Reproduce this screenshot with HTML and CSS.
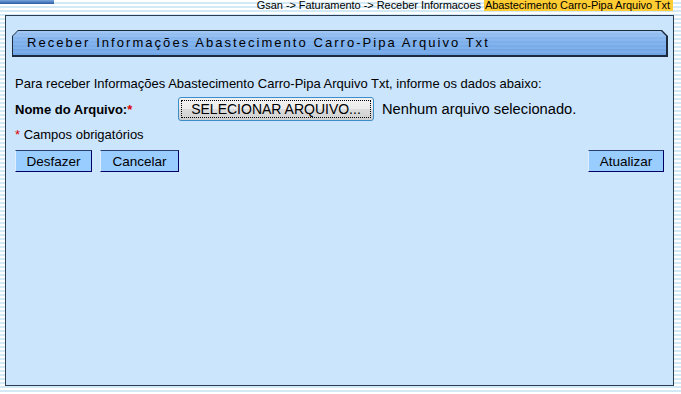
FILE: index.html
```html
<!DOCTYPE html>
<html lang="pt-BR">
<head>
  <meta charset="UTF-8" />
  <title>Gsan - Receber Informações Abastecimento Carro-Pipa Arquivo Txt</title>
  <link rel="stylesheet" href="styles.css">
</head>
<body>
  <div class="topbar">
    <div class="topbar-logo"></div>
    <div class="breadcrumb">
      Gsan -&gt; Faturamento -&gt; Receber Informacoes <span class="crumb-current">Abastecimento Carro-Pipa Arquivo Txt</span>
    </div>
  </div>

  <div class="panel">
    <div class="tab">
      <div class="tab-inner">Receber Informações Abastecimento Carro-Pipa Arquivo Txt</div>
    </div>

    <form class="form" onsubmit="return false">
      <p class="intro">Para receber Informações Abastecimento Carro-Pipa Arquivo Txt, informe os dados abaixo:</p>

      <div class="field-row">
        <label class="field-label">Nome do Arquivo:<span class="req">*</span></label>
        <label class="file-btn">SELECIONAR ARQUIVO...<input type="file" class="file-input"></label>
        <span class="file-name">Nenhum arquivo selecionado.</span>
      </div>

      <p class="note"><span class="req">*</span> Campos obrigatórios</p>

      <div class="actions">
        <button type="reset" class="btn btn-undo">Desfazer</button>
        <button type="button" class="btn btn-cancel">Cancelar</button>
        <button type="submit" class="btn btn-right">Atualizar</button>
      </div>
    </form>
  </div>
</body>
</html>
```

FILE: styles.css
```css
body {
  margin: 0;
  height: 394px;
  overflow: hidden;
  font-family: "Liberation Sans", Arial, sans-serif;
  background: repeating-linear-gradient(to bottom, #ffffff 0, #ffffff 2px, #d3e9f6 2px, #d3e9f6 4px);
}
.topbar {
  height: 15px;
  display: flex;
  justify-content: space-between;
  align-items: flex-start;
}
.topbar-logo {
  width: 54px;
  height: 4px;
  background: linear-gradient(to bottom, #7aa6dc, #2a5aa6);
}
.breadcrumb {
  font-size: 11px;
  line-height: 10px;
  color: #000;
  margin-right: 8px;
  white-space: nowrap;
  letter-spacing: -0.05px;
}
.crumb-current {
  background: #ffcc33;
  padding: 0 3px 0 1px;
}
.panel {
  margin-left: 5px;
  width: 669px;
  height: 371px;
  box-sizing: border-box;
  border: 1px solid #2b3c55;
  background: #cbe5fd;
  padding: 14px 5px 0 6px;
}
.tab {
  height: 27px;
  background: #1c2a3e;
  padding: 1px 2px 2px 1px;
  box-sizing: border-box;
  clip-path: polygon(6px 0, calc(100% - 6px) 0, 100% 6px, 100% 100%, 0 100%, 0 6px);
}
.tab-inner {
  height: 100%;
  background:
    repeating-linear-gradient(to bottom, rgba(255,255,255,0.08) 0, rgba(255,255,255,0.08) 2px, rgba(0,0,0,0) 2px, rgba(0,0,0,0) 4px),
    linear-gradient(to bottom, #9cc4f2 0, #7eb0ec 40%, #6ea4e6 100%);
  clip-path: polygon(5px 0, calc(100% - 5px) 0, 100% 5px, 100% 100%, 0 100%, 0 5px);
  font-size: 13px;
  letter-spacing: 2.05px;
  line-height: 24px;
  padding-left: 14px;
  color: #000;
  white-space: nowrap;
}
.form {
  padding: 0 3px;
  font-size: 13px;
}
.intro {
  margin: 19px 0 0;
  line-height: 15px;
}
.field-row {
  display: flex;
  align-items: center;
  margin-top: 6px;
  height: 24px;
}
.field-label {
  font-weight: bold;
  width: 163px;
}
.req {
  color: #dd0000;
}
.file-btn {
  display: inline-block;
  box-sizing: border-box;
  width: 196px;
  height: 24px;
  line-height: 22px;
  font-size: 14px;
  text-align: center;
  color: #000;
  border: 1px solid #3c8cc8;
  border-radius: 3px;
  background: linear-gradient(to bottom, #f2f2f2 0, #ebebeb 50%, #dcdcdc 50%, #cfcfcf 100%);
  outline: 1px dotted #000;
  outline-offset: -4px;
  cursor: pointer;
}
.file-input {
  display: none;
}
.file-name {
  font-size: 14.7px;
  margin-left: 8px;
}
.note {
  margin: 6px 0 0;
  line-height: 15px;
}
.actions {
  display: flex;
  gap: 8px;
  margin-top: 8px;
}
.btn {
  font-family: "Liberation Sans", Arial, sans-serif;
  font-size: 13.5px;
  height: 22px;
  padding: 0 9px;
  background: #99ccff;
  color: #000;
  border: 1px solid;
  border-color: #2a3f6e #000066 #000066 #dfeeff;
  cursor: pointer;
}
.btn-undo {
  width: 77px;
}
.btn-cancel {
  width: 79px;
}
.btn-right {
  margin-left: auto;
  width: 76px;
  margin-right: 1px;
}
```
